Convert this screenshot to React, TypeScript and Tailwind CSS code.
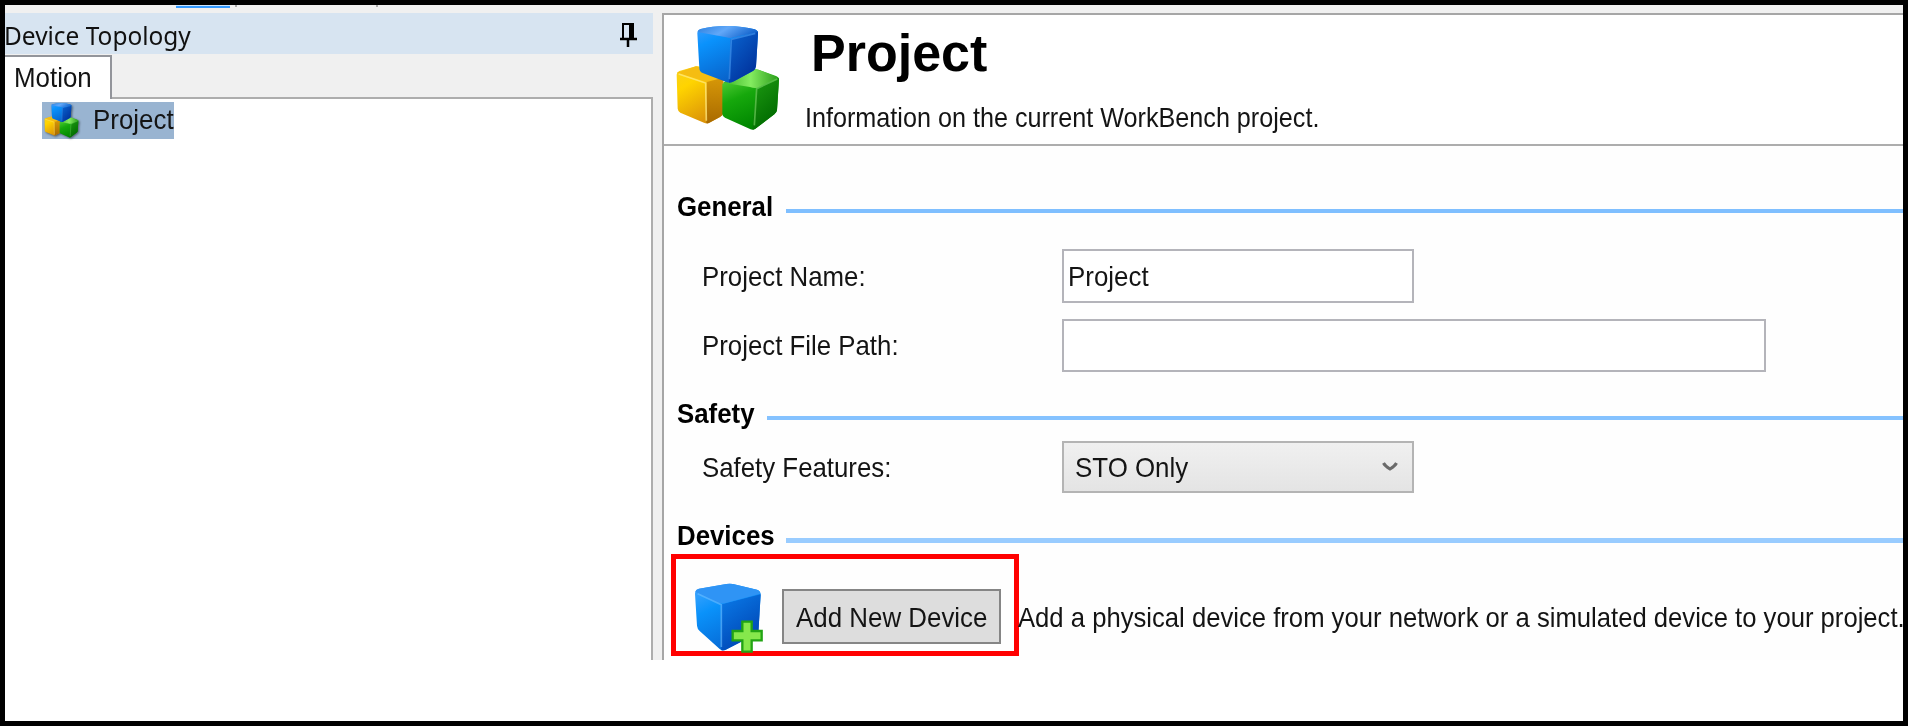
import type { ReactNode } from "react";

function Label({ children, className = "" }: { children: ReactNode; className?: string }) {
  return (
    <span className={`block origin-left whitespace-nowrap text-[28px] leading-[30px] ${className}`}>
      {children}
    </span>
  );
}

function Cubes({ id, className }: { id: string; className: string }) {
  return (
    <svg viewBox="345 75 318 318" className={className} preserveAspectRatio="none">
      <defs>
        <linearGradient id={`${id}bf`} x1="0" y1="0" x2="0.5" y2="1">
          <stop offset="0" stopColor="#3a9dff" />
          <stop offset="0.3" stopColor="#0a92fc" />
          <stop offset="1" stopColor="#0860c8" />
        </linearGradient>
        <linearGradient id={`${id}bs`} x1="0" y1="0" x2="0.7" y2="1">
          <stop offset="0" stopColor="#0a66d2" />
          <stop offset="1" stopColor="#00309a" />
        </linearGradient>
        <linearGradient id={`${id}bt`} x1="0" y1="0" x2="1" y2="0.3">
          <stop offset="0" stopColor="#2a80e0" />
          <stop offset="0.5" stopColor="#62a8f8" />
          <stop offset="1" stopColor="#1767cf" />
        </linearGradient>
        <linearGradient id={`${id}yf`} x1="0" y1="0" x2="0.5" y2="1">
          <stop offset="0" stopColor="#f8d020" />
          <stop offset="0.35" stopColor="#ffd400" />
          <stop offset="1" stopColor="#dc9408" />
        </linearGradient>
        <linearGradient id={`${id}ys`} x1="0" y1="0" x2="0" y2="1">
          <stop offset="0" stopColor="#d99a08" />
          <stop offset="1" stopColor="#a96a00" />
        </linearGradient>
        <linearGradient id={`${id}gf`} x1="0" y1="0" x2="0.4" y2="1">
          <stop offset="0" stopColor="#6cdc48" />
          <stop offset="0.5" stopColor="#16a80c" />
          <stop offset="1" stopColor="#008600" />
        </linearGradient>
        <linearGradient id={`${id}gs`} x1="0" y1="0" x2="0.5" y2="1">
          <stop offset="0" stopColor="#1e9c12" />
          <stop offset="1" stopColor="#006a00" />
        </linearGradient>
        <linearGradient id={`${id}gt`} x1="0" y1="0" x2="1" y2="0">
          <stop offset="0" stopColor="#3cb428" />
          <stop offset="0.5" stopColor="#84ec60" />
          <stop offset="1" stopColor="#2c9c1c" />
        </linearGradient>
      </defs>
      <path d="M350 224Q350 216 358 213L408 199Q416 198 424 200L490 228V340Q488 346 480 351L448 368Q440 372 432 368L361 338Q354 334 353 326Z" fill={`url(#${id}yf)`} />
      <path d="M440 244L490 226V340Q488 346 480 351L448 368Q444 371 439 370Z" fill={`url(#${id}ys)`} />
      <path d="M351 218L408 199L470 218L478 236L440 246Z" fill="#f5bd12" />
      <path d="M356 222L437 249L439 362" fill="none" stroke="#ffe880" strokeWidth="5" opacity=".75" />
      <path d="M487 252Q520 224 582 208Q590 207 598 210L648 228Q658 232 657 242L651 330Q650 338 643 343L586 386Q578 391 570 387L495 353Q487 349 487 341Z" fill={`url(#${id}gf)`} />
      <path d="M589 262L657 234L651 330Q650 338 643 343L586 386Q582 389 577 389Z" fill={`url(#${id}gs)`} />
      <path d="M489 248Q525 222 582 208Q590 207 598 210L655 233L592 263Q582 265 570 261Z" fill={`url(#${id}gt)`} />
      <path d="M652 237L590 266L583 376" fill="none" stroke="#7cd868" strokeWidth="5" opacity=".6" />
      <path d="M412 100Q412 90 422 87Q455 78 500 78Q550 79 584 88Q595 91 594 102L588 198Q587 207 580 212L522 244Q510 250 499 246L428 219Q418 215 418 205Z" fill={`url(#${id}bf)`} />
      <path d="M511 118L594 94V102L588 198Q587 207 580 212L522 244Q515 248 507 248Z" fill={`url(#${id}bs)`} />
      <path d="M413 96Q414 89 422 87Q455 78 500 78Q550 79 584 88Q591 90 593 96L516 113Q508 115 499 112Z" fill={`url(#${id}bt)`} />
      <path d="M586 100L514 118L508 238" fill="none" stroke="#4a9cf4" strokeWidth="5" opacity=".6" />
    </svg>
  );
}

function AddDeviceIcon() {
  return (
    <svg viewBox="0 0 210 210" className="h-[70px] w-[70px] shrink-0">
      <defs>
        <linearGradient id="af" x1="0" y1="0" x2="0.5" y2="1">
          <stop offset="0" stopColor="#48a8ff" />
          <stop offset="0.4" stopColor="#0a92fa" />
          <stop offset="1" stopColor="#0668d4" />
        </linearGradient>
        <linearGradient id="as" x1="0" y1="0" x2="0.5" y2="1">
          <stop offset="0" stopColor="#0a7cea" />
          <stop offset="1" stopColor="#0046b4" />
        </linearGradient>
      </defs>
      <path d="M0 32Q0 20 12 17L94 3Q104 1 114 3L186 20Q198 24 197 36L190 150L92 200Q82 204 74 198L14 144Q7 138 6 128Z" fill="url(#af)" />
      <path d="M80 64L197 34L190 150L92 200Q86 203 79 202Z" fill="url(#as)" />
      <path d="M1 26Q3 19 12 17L94 3Q104 1 114 3L186 20Q194 22 196 32L90 61Q80 63 70 60Z" fill="#2f94f5" />
      <path d="M8 32L79 65V192" fill="none" stroke="#6cbcff" strokeWidth="5" opacity=".6" />
      <path d="M142 116h28v28h30v28h-30v34h-28v-34h-29v-28h29z" fill="#86e84c" stroke="#22a414" strokeWidth="7" />
    </svg>
  );
}

function SectionHeading({ title, width, line }: { title: string; width: string; line: string }) {
  return (
    <div className="flex h-[30px] pl-[13px]">
      <div className={width}>
        <Label className="scale-x-[0.922] pt-px font-bold text-black">{title}</Label>
      </div>
      <div className={`mt-[18px] flex-1 ${line}`} />
    </div>
  );
}

function Field({ label, className, children }: { label: string; className: string; children: ReactNode }) {
  return (
    <div className={`flex items-center pl-[38px] ${className}`}>
      <div className="w-[360px]">
        <Label className="scale-x-[0.922] pt-px">{label}</Label>
      </div>
      {children}
    </div>
  );
}

function DeviceTopology() {
  return (
    <aside className="flex w-[648px] flex-col">
      <div className="flex h-[41px] items-center justify-between bg-[#d7e4f1]">
        <span className="-ml-px origin-left scale-x-[0.94] whitespace-nowrap pt-0.5 font-['Noto_Sans'] text-[26px] leading-[30px] text-[#111]">
          Device Topology
        </span>
        <svg viewBox="0 0 18 26" className="mt-[3px] mr-4 h-[26px] w-[18px]" fill="none" stroke="#000">
          <path d="M4 16V2h10v14" strokeWidth="2" />
          <path d="M12 1v15" strokeWidth="4" />
          <path d="M1 17h17M9 17v8" strokeWidth="2.5" />
        </svg>
      </div>
      <div className="flex h-[45px] items-end">
        <div className="flex h-[44px] w-[107px] items-center border-t-2 border-r-2 border-[#93959b] bg-white pl-[9px]">
          <Label className="scale-x-[0.925]">Motion</Label>
        </div>
        <div className="h-[2px] flex-1 bg-[#adadad]" />
      </div>
      <div className="flex-1 border-r-2 border-[#adadad] bg-white pt-[3px] pl-[37px]">
        <div className="flex h-[37px] w-[132px] items-center bg-[#99b4d1]">
          <Cubes id="s" className="ml-0.5 h-[35px] w-[35px] shrink-0 drop-shadow-[1px_1px_1px_rgba(0,0,0,.5)]" />
          <Label className="ml-[14px] w-[80px] scale-x-[0.925] pb-0.5">Project</Label>
        </div>
      </div>
    </aside>
  );
}

function ProjectView() {
  return (
    <main className="flex flex-1 flex-col overflow-hidden border-t-2 border-l-2 border-[#a6a6a6] bg-[#fefefe]">
      <header className="flex h-[131px] shrink-0 border-b-2 border-[#adadad] bg-white">
        <Cubes id="l" className="mt-[10px] ml-[11px] h-[106px] w-[106px] shrink-0" />
        <div className="flex flex-col">
          <h1 className="mt-[9px] ml-[30px] origin-left scale-x-[1.02] whitespace-nowrap text-[51px] leading-[60px] font-bold text-black">
            Project
          </h1>
          <Label className="mt-[19px] ml-6 scale-x-[0.899]">Information on the current WorkBench project.</Label>
        </div>
      </header>

      <div className="flex flex-col pt-[45px]">
        <SectionHeading title="General" width="w-[109px]" line="h-1 bg-[#7fbfff]" />
        <Field label="Project Name:" className="mt-7 h-[54px]">
          <div className="flex h-full w-[352px] items-center border-2 border-[#b4b4ba] bg-white pl-1">
            <Label className="scale-x-[0.925] pt-0.5">Project</Label>
          </div>
        </Field>
        <Field label="Project File Path:" className="mt-4 mb-[26px] h-[53px]">
          <div className="h-full w-[704px] border-2 border-[#b4b4ba] bg-white" />
        </Field>
        <SectionHeading title="Safety" width="w-[90px]" line="h-1 bg-[#85c2ff]" />
        <Field label="Safety Features:" className="mt-[13px] mb-[27px] h-[52px]">
          <div className="flex h-full w-[352px] items-center justify-between border-2 border-[#b4b4b4] bg-linear-to-b from-[#f0f0f0] to-[#e4e4e4] pr-[14px] pl-[11px]">
            <Label className="scale-x-[0.925] pt-0.5">STO Only</Label>
            <svg viewBox="0 0 16 12" className="h-3 w-4" fill="none" stroke="#6a6a6a" strokeWidth="3">
              <path d="M1.5 2Q3 5 8 8Q13 5 14.5 2" />
            </svg>
          </div>
        </Field>
        <SectionHeading title="Devices" width="w-[109px]" line="h-[5px] bg-[#99ccff]" />
        <div className="mt-1 flex h-[102px] items-center pl-[7px]">
          <div className="flex h-full w-[348px] shrink-0 items-start border-[5px] border-[#ff0000] pl-[19px]">
            <div className="mt-6">
              <AddDeviceIcon />
            </div>
            <button className="mt-[30px] ml-[17px] flex h-[55px] w-[219px] items-center border-2 border-[#858585] bg-[#dddddd] pl-3">
              <Label className="w-[190px] scale-x-[0.925] pt-0.5 text-left">Add New Device</Label>
            </button>
          </div>
          <Label className="-ml-px scale-x-[0.916] pt-[25px]">
            Add a physical device from your network or a simulated device to your project.
          </Label>
        </div>
      </div>
    </main>
  );
}

export default function App() {
  return (
    <div className="h-[726px] w-[1908px] overflow-hidden border-[5px] border-black bg-white font-['Liberation_Sans',sans-serif] text-[#141414]">
      <div className="flex h-[655px] flex-col bg-[#f0f0f0]">
        <div className="flex h-2 items-start">
          <div className="ml-[171px] h-[3px] w-[54px] border-b-2 border-[#3399ff] bg-[#cce4fb]" />
          <div className="ml-[5px] h-[2px] w-[2px] bg-[#aaa]" />
          <div className="ml-[139px] h-[2px] w-[2px] bg-[#aaa]" />
        </div>
        <div className="flex min-h-0 flex-1 gap-[9px]">
          <DeviceTopology />
          <ProjectView />
        </div>
      </div>
    </div>
  );
}
